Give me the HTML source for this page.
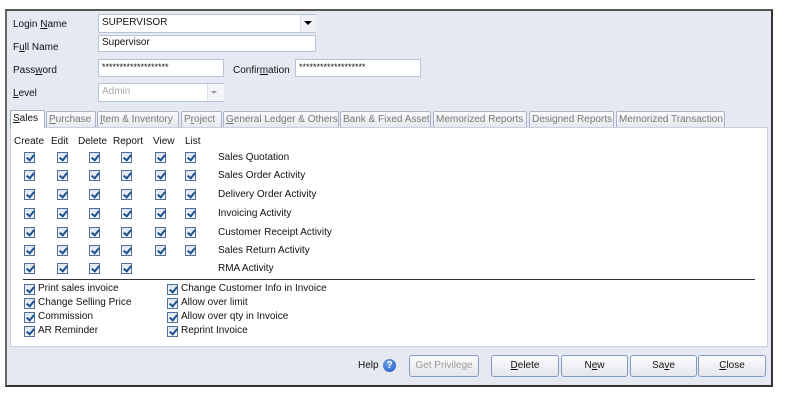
<!DOCTYPE html>
<html><head><meta charset="utf-8"><style>
body{margin:0;width:791px;height:407px;background:#fff;font-family:"Liberation Sans","DejaVu Sans",sans-serif;font-size:10px;color:#111;position:relative;overflow:hidden}
div{white-space:nowrap}
.a{position:absolute}
.frame{position:absolute;left:5px;top:9px;width:764px;height:374px;border:2px solid #333;border-top-color:#555;border-left-color:#666;background:#e7e9f2}
.inp{position:absolute;background:#fff;border:1px solid #b9c3d6;box-sizing:border-box;padding:2px 3px;font-size:10px}
.tab{position:absolute;top:111px;height:16px;border:1px solid #aab3c6;border-bottom:none;background:linear-gradient(#fbfbfd,#e6e8ef);color:#777;font-size:10px;line-height:16px;padding:0 2px;box-sizing:border-box;border-radius:2px 2px 0 0;overflow:hidden}
.panel{position:absolute;left:10px;top:127px;width:758px;height:220px;background:#fff;border:1px solid #c8d0e0;box-sizing:border-box}
.cb{position:absolute;width:11px;height:11px;border:1px solid #4f6f9a;box-sizing:border-box;background:linear-gradient(#dfe6f0,#f6f8fb)}
.cb:after{content:"";position:absolute;left:3px;top:0px;width:3px;height:6px;border:solid #1d4f8f;border-width:0 2px 2px 0;transform:rotate(40deg)}
.btn{position:absolute;top:355px;height:22px;border:1px solid #7f9cc4;border-radius:3px;box-sizing:border-box;background:linear-gradient(#fdfdfe,#e3e6ec);text-align:center;line-height:20px;font-size:10px}
</style></head><body>
<div class="frame"></div>
<div class="a" style="left:13px;top:19px">Login <u>N</u>ame</div>
<div class="a" style="left:13px;top:42px">F<u>u</u>ll Name</div>
<div class="a" style="left:13px;top:65px">Pass<u>w</u>ord</div>
<div class="a" style="left:13px;top:88px"><u>L</u>evel</div>
<div class="inp" style="left:98px;top:14px;width:218px;height:19px">SUPERVISOR</div>
<div class="a" style="left:300px;top:15px;width:15px;height:17px;background:#eef0f4;border-left:1px solid #dde"></div>
<div class="a" style="left:304px;top:21px;width:0;height:0;border:4px solid transparent;border-top:4px solid #000;border-bottom:none"></div>
<div class="inp" style="left:98px;top:35px;width:218px;height:17px;padding-top:1px">Supervisor</div>
<div class="inp" style="left:98px;top:59px;width:126px;height:18px;font-size:9px">*******************</div>
<div class="a" style="left:233px;top:65px">Confir<u>m</u>ation</div>
<div class="inp" style="left:295px;top:59px;width:126px;height:18px;font-size:9px">*******************</div>
<div class="inp" style="left:98px;top:83px;width:126px;height:19px;color:#aaa">Admin</div>
<div class="a" style="left:207px;top:84px;width:16px;height:17px;border-left:1px solid #dde;background:#f3f4f7"></div>
<div class="a" style="left:211px;top:91px;width:0;height:0;border:3px solid transparent;border-top:3px solid #999;border-bottom:none"></div>
<div class="panel"></div>
<div class="tab" style="left:10px;width:35px;top:110px;height:18px;background:#fff;color:#111;border-color:#9fb0cc"><u>S</u>ales</div>
<div class="tab" style="left:46px;width:50px"><u>P</u>urchase</div>
<div class="tab" style="left:97px;width:82px"><u>I</u>tem &amp; Inventory</div>
<div class="tab" style="left:181px;width:41px">P<u>r</u>oject</div>
<div class="tab" style="left:223px;width:116px"><u>G</u>eneral Ledger &amp; Others</div>
<div class="tab" style="left:340px;width:91px">Bank &amp; Fixed Asset</div>
<div class="tab" style="left:433px;width:94px">Memorized Reports</div>
<div class="tab" style="left:529px;width:85px">Designed Reports</div>
<div class="tab" style="left:616px;width:109px">Memorized Transaction</div>
<div class="a" style="left:14px;top:136px">Create</div>
<div class="a" style="left:51px;top:136px">Edit</div>
<div class="a" style="left:78px;top:136px">Delete</div>
<div class="a" style="left:113px;top:136px">Report</div>
<div class="a" style="left:153px;top:136px">View</div>
<div class="a" style="left:185px;top:136px">List</div>
<div id="grid"></div>
<div class="a" style="left:218px;top:152px">Sales Quotation</div>
<div class="a" style="left:218px;top:170px">Sales Order Activity</div>
<div class="a" style="left:218px;top:189px">Delivery Order Activity</div>
<div class="a" style="left:218px;top:208px">Invoicing Activity</div>
<div class="a" style="left:218px;top:227px">Customer Receipt Activity</div>
<div class="a" style="left:218px;top:245px">Sales Return Activity</div>
<div class="a" style="left:218px;top:263px">RMA Activity</div>
<div class="a" style="left:23px;top:279px;width:732px;height:1px;background:#333"></div>
<div class="cb" style="left:24px;top:284px"></div><div class="a" style="left:38px;top:283px">Print sales invoice</div>
<div class="cb" style="left:24px;top:298px"></div><div class="a" style="left:38px;top:297px">Change Selling Price</div>
<div class="cb" style="left:24px;top:312px"></div><div class="a" style="left:38px;top:311px">Commission</div>
<div class="cb" style="left:24px;top:326px"></div><div class="a" style="left:38px;top:325px">AR Reminder</div>
<div class="cb" style="left:167px;top:284px"></div><div class="a" style="left:181px;top:283px">Change Customer Info in Invoice</div>
<div class="cb" style="left:167px;top:298px"></div><div class="a" style="left:181px;top:297px">Allow over limit</div>
<div class="cb" style="left:167px;top:312px"></div><div class="a" style="left:181px;top:311px">Allow over qty in Invoice</div>
<div class="cb" style="left:167px;top:326px"></div><div class="a" style="left:181px;top:325px">Reprint Invoice</div>
<div class="a" style="left:358px;top:360px">Help</div>
<div class="a" style="left:383px;top:359px;width:13px;height:13px;border-radius:50%;background:radial-gradient(circle at 40% 35%,#6fa6f0,#1c4fb8);color:#fff;font-weight:bold;font-size:10px;text-align:center;line-height:13px">?</div>
<div class="btn" style="left:409px;width:70px;color:#999">Get Privilege</div>
<div class="btn" style="left:491px;width:68px"><u>D</u>elete</div>
<div class="btn" style="left:561px;width:67px">N<u>e</u>w</div>
<div class="btn" style="left:630px;width:67px">Sa<u>v</u>e</div>
<div class="btn" style="left:698px;width:68px"><u>C</u>lose</div>
<script>
var xs=[24,57,89,121,155,185],ys=[152,170,189,208,227,245,263],h="";
ys.forEach(function(y,i){xs.forEach(function(x,j){if(i==6&&j>3)return;h+='<div class="cb" style="left:'+x+'px;top:'+y+'px"></div>';});});
document.getElementById('grid').innerHTML=h;
</script>
</body></html>
